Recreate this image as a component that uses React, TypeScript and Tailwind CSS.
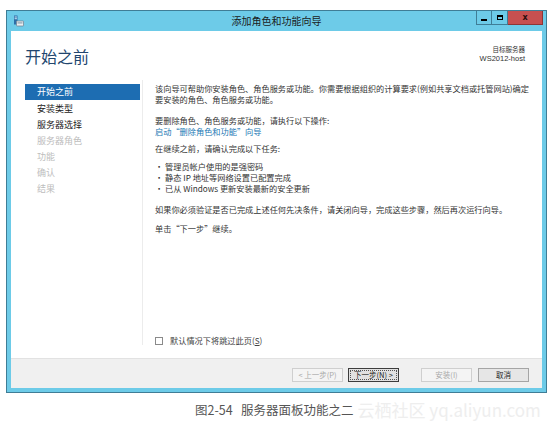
import React from 'react';

const cjk = { fontFamily: '"Noto Sans CJK SC", "Noto Sans", sans-serif' };

const navItems: { label: string; state: 'active' | 'done' | 'off' }[] = [
  { label: '开始之前', state: 'active' },
  { label: '安装类型', state: 'done' },
  { label: '服务器选择', state: 'done' },
  { label: '服务器角色', state: 'off' },
  { label: '功能', state: 'off' },
  { label: '确认', state: 'off' },
  { label: '结果', state: 'off' },
];

function ServerIcon() {
  return (
    <svg width="11" height="12" viewBox="0 0 11 12">
      <rect x="1" y="0.5" width="3.5" height="9" fill="#2d6fa8" />
      <rect x="1.6" y="1.5" width="2.3" height="1" fill="#cfe6f5" />
      <rect x="1.6" y="3.2" width="2.3" height="1" fill="#cfe6f5" />
      <rect x="3.5" y="6" width="7" height="5" rx="0.5" fill="#e9eef2" stroke="#6b7d8c" strokeWidth="0.7" />
      <rect x="4.5" y="7.3" width="5" height="1.2" fill="#8aa0b0" />
    </svg>
  );
}

function Btn({ children, variant }: { children: React.ReactNode; variant: 'disabled' | 'default' | 'normal' }) {
  if (variant === 'default') {
    return (
      <div className="w-[51px] h-[14px] border border-[#3c3c3c] bg-[#e1e1e1] p-[1px]">
        <div className="h-full border border-dotted border-[#555] flex items-center justify-center text-[7.5px] leading-none text-[#222]">
          {children}
        </div>
      </div>
    );
  }
  return (
    <div
      className={`w-[51px] h-[14px] border flex items-center justify-center text-[7.5px] leading-none ${
        variant === 'disabled' ? 'border-[#cfcfcf] bg-[#f4f4f4] text-[#a8a8a8]' : 'border-[#a5a5a5] bg-[#e6e6e6] text-[#222]'
      }`}
    >
      {children}
    </div>
  );
}

export default function App() {
  return (
    <div className="w-[554px] h-[429px] bg-white relative overflow-hidden" style={cjk}>
      <div className="pt-[10px] pl-[6px]">
        <div className="w-[541px] h-[383px] border border-[#3f7d96] bg-[#6dcbe8] flex flex-col">
          {/* title bar */}
          <div className="h-[20px] flex items-start relative">
            <div className="pl-[6px] pt-[4px]">
              <ServerIcon />
            </div>
            <div className="absolute left-0 right-0 top-[3px] text-center text-[10px] leading-[14px] text-[#1b1b1b]">
              添加角色和功能向导
            </div>
            <div className="ml-auto mr-[3px] flex">
              <div className="w-[16px] h-[14px] border border-[#3f7d96] border-t-0 flex items-end justify-center pb-[3px]">
                <div className="w-[6px] h-[2px] bg-black" />
              </div>
              <div className="w-[16px] h-[14px] border border-[#3f7d96] border-t-0 border-l-0 flex items-center justify-center">
                <div className="w-[6px] h-[5px] border-[1.5px] border-black border-t-[2px]" />
              </div>
              <div className="w-[35px] h-[14px] bg-[#c75050] border border-[#8e3636] border-t-0 border-l-0 flex items-center justify-center text-[8px] font-bold leading-none text-[#2a0d0d]" style={{ fontFamily: '"DejaVu Sans", sans-serif' }}>
                x
              </div>
            </div>
          </div>

          {/* client area */}
          <div className="flex-1 mx-[4px] mb-[4px] bg-white flex flex-col">
            <div className="h-[49px] flex justify-between">
              <div className="pl-[14px] pt-[15px] text-[16px] leading-[20px] text-[#22466e]">开始之前</div>
              <div className="pr-[17px] pt-[14px] text-right text-[#333]">
                <div className="text-[6.5px] leading-[9px]">目标服务器</div>
                <div className="text-[7.5px] leading-[10px]" style={{ fontFamily: '"Liberation Sans", sans-serif' }}>WS2012-host</div>
              </div>
            </div>

            <div className="flex-1 flex">
              <div className="w-[132px] pl-[14px] pr-[2px] mb-[13px] border-r border-[#ececec] pt-[4px]">
                {navItems.map((item) => (
                  <div
                    key={item.label}
                    className={`h-[16.2px] pl-[12px] flex items-center text-[9px] ${
                      item.state === 'active'
                        ? 'bg-[#1d6db2] text-white'
                        : item.state === 'done'
                        ? 'text-[#222]'
                        : 'text-[#bdbdbd]'
                    }`}
                  >
                    {item.label}
                  </div>
                ))}
              </div>

              <div className="flex-1 pl-[12px] pt-[2.5px] flex flex-col text-[8.2px] leading-[11px] text-[#333]">
                <p>
                  该向导可帮助你安装角色、角色服务或功能。你需要根据组织的计算要求(例如共享文档或托管网站)确定
                  <br />
                  要安装的角色、角色服务或功能。
                </p>
                <p className="mt-[10px]">要删除角色、角色服务或功能，请执行以下操作:</p>
                <p className="text-[#1a78b4]">启动“删除角色和功能”向导</p>
                <p className="mt-[6px]">在继续之前，请确认完成以下任务:</p>
                <ul className="mt-[7px]">
                  <li>• 管理员帐户使用的是强密码</li>
                  <li>• 静态 IP 地址等网络设置已配置完成</li>
                  <li>• 已从 Windows 更新安装最新的安全更新</li>
                </ul>
                <p className="mt-[10px]">如果你必须验证是否已完成上述任何先决条件，请关闭向导，完成这些步骤，然后再次运行向导。</p>
                <p className="mt-[8px]">单击“下一步”继续。</p>

                <div className="mt-auto mb-[12px] flex items-center gap-[7px] text-[#444]">
                  <div className="w-[8px] h-[8px] border border-[#8a8a8a] bg-white" />
                  <span>
                    默认情况下将跳过此页(<span className="underline">S</span>)
                  </span>
                </div>
              </div>
            </div>

            <div className="h-[30px] bg-[#f0f0f0] border-t border-[#e2e2e2] flex justify-end pt-[9px] pr-[13px]">
              <Btn variant="disabled">&lt; 上一步(P)</Btn>
              <div className="ml-[5px]">
                <Btn variant="default">下一步(N) &gt;</Btn>
              </div>
              <div className="ml-[22px]">
                <Btn variant="disabled">安装(I)</Btn>
              </div>
              <div className="ml-[6px]">
                <Btn variant="normal">取消</Btn>
              </div>
            </div>
          </div>
        </div>
      </div>

      <div className="flex items-center mt-[8px] pl-[195px]">
        <span className="text-[12.5px] leading-[16px] text-[#555] whitespace-pre">图2-54   服务器面板功能之二</span>
        <span className="ml-[4px] text-[17px] leading-[18px] text-[#eeeeee] whitespace-pre">云栖社区 yq.aliyun.com</span>
      </div>
    </div>
  );
}
